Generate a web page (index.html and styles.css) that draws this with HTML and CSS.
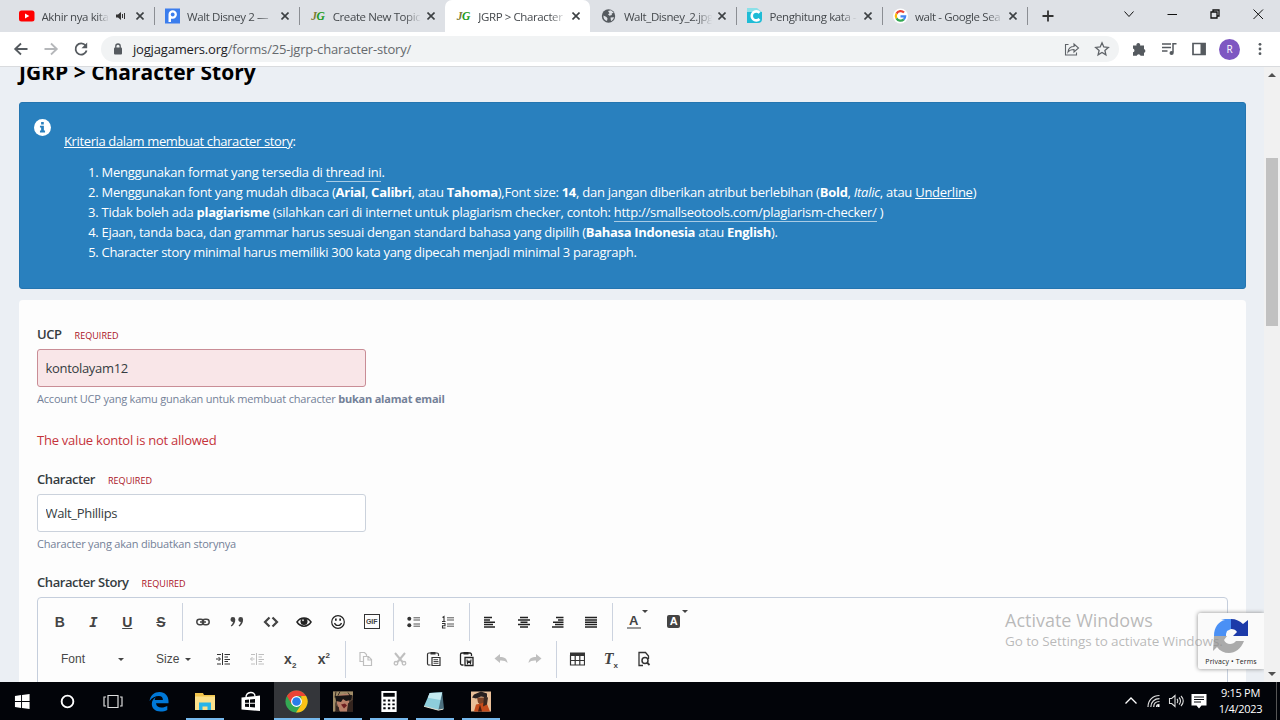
FILE: index.html
```html
<!DOCTYPE html>
<html lang="id">
<head>
    <meta charset="utf-8">
    <title>JGRP &gt; Character Story</title>
    <link rel="stylesheet" href="styles.css">
</head>
<body>

<!-- tabs -->
<div class="tabstrip">
    <div class="tab">
        <svg class="favicon" viewBox="0 0 16 16"><rect y="2.5" width="15.5" height="11" rx="2.5" fill="#f00"/><path d="M6 5.500v5l4.300-2.500z" fill="#fff"/></svg>
        <span class="tab-title short">Akhir nya kita</span>
        <svg class="sound" viewBox="0 0 10 10"><path d="M0 3.500h2L5 1v8L2 6.500H0z" fill="#333"/><path d="M6.500 3v4M8.500 2v6" stroke="#333"/></svg>
        <svg class="close" viewBox="0 0 8 8"><path d="M.5.5l7 7M7.500.5l-7 7"/></svg>
    </div>
    <div class="tab">
        <svg class="favicon" viewBox="0 0 16 16"><rect width="15" height="15" y=".5" fill="#3b7ded"/><path d="M3.500 8V6.500a4.200 4.200 0 1 1 4.200 4.200H6V14H3.500z" fill="#fff"/><circle cx="7.700" cy="6.500" r="1.900" fill="#3b7ded"/></svg>
        <span class="tab-title">Walt Disney 2 —</span>
        <svg class="close" viewBox="0 0 8 8"><path d="M.5.5l7 7M7.500.5l-7 7"/></svg>
    </div>
    <div class="tab no-sep">
        <span class="favicon jg"><i>J</i>G</span>
        <span class="tab-title">Create New Topic</span>
        <svg class="close" viewBox="0 0 8 8"><path d="M.5.5l7 7M7.500.5l-7 7"/></svg>
    </div>
    <div class="tab active no-sep">
        <span class="favicon jg"><i>J</i>G</span>
        <span class="tab-title">JGRP &gt; Character</span>
        <svg class="close" viewBox="0 0 8 8"><path d="M.5.5l7 7M7.500.5l-7 7"/></svg>
    </div>
    <div class="tab">
        <svg class="favicon" viewBox="0 0 16 16"><circle cx="7.500" cy="8" r="6.700" fill="#555a5f"/><path d="M2.500 7.500l3 1.500 1 1.500-.5 2.500C3.500 12.500 2 10 2.500 7.500zM7 3l3-.8 2.700 2.600-2 .7.200 1.500-2.400.7-1.500-1.500 1.500-1zM9.500 9.500l3.500-.3c-.5 2-1.500 3-3 3.800z" fill="#dee1e6"/></svg>
        <span class="tab-title">Walt_Disney_2.jpg</span>
        <svg class="close" viewBox="0 0 8 8"><path d="M.5.5l7 7M7.500.5l-7 7"/></svg>
    </div>
    <div class="tab">
        <svg class="favicon" viewBox="0 0 16 16"><path d="M0 0h10l5 4v7l-4 4H0z" fill="#8be0e8"/><path d="M0 4h15v7a4 4 0 0 1-4 4H0z" fill="#1fbcd6"/><path d="M12.500 4.800a4.500 4.500 0 1 0 0 6.200" fill="none" stroke="#fff" stroke-width="2.600"/></svg>
        <span class="tab-title">Penghitung kata -</span>
        <svg class="close" viewBox="0 0 8 8"><path d="M.5.5l7 7M7.500.5l-7 7"/></svg>
    </div>
    <div class="tab">
        <svg class="favicon" viewBox="0 0 16 16"><circle cx="7.500" cy="8" r="7.500" fill="#fff"/><g fill="none" stroke-width="2.200"><path d="M11 4.600A4.700 4.700 0 0 0 3.500 5.600" stroke="#ea4335"/><path d="M3.500 5.600a4.700 4.700 0 0 0 0 4.800" stroke="#fbbc05"/><path d="M3.500 10.400a4.700 4.700 0 0 0 7.300 1" stroke="#34a853"/><path d="M10.800 11.400A4.500 4.500 0 0 0 12.200 8.300H7.500" stroke="#4285f4"/></g></svg>
        <span class="tab-title">walt - Google Sea</span>
        <svg class="close" viewBox="0 0 8 8"><path d="M.5.5l7 7M7.500.5l-7 7"/></svg>
    </div>
    <svg class="newtab" viewBox="0 0 12 12"><path d="M6 .5v11M.5 6h11" stroke="#333" stroke-width="1.800"/></svg>
    <div class="window-buttons">
        <svg viewBox="0 0 12 12"><path d="M1.500 3.500L6 8.500l4.500-5"/></svg>
        <svg viewBox="0 0 12 12"><path d="M1.500 6.500h9.500"/></svg>
        <svg viewBox="0 0 12 12"><path d="M2 4h6v6H2zM4 4V2h6v6H8" stroke-width="1.300"/></svg>
        <svg viewBox="0 0 12 12"><path d="M1.500 1.500l9.500 9.500M11 1.500L1.500 11"/></svg>
    </div>
</div>

<!-- toolbar -->
<div class="toolbar">
    <div class="nav">
        <svg viewBox="0 0 16 16"><path d="M14.500 8H2.500M8 2.500L2.200 8 8 13.500"/></svg>
        <svg class="off" viewBox="0 0 16 16"><path d="M1.500 8h12M8 2.500L13.800 8 8 13.500"/></svg>
        <svg viewBox="0 0 16 16"><path d="M12.600 4.500A5.600 5.600 0 1 0 13.600 9.500"/><path d="M14.200 1.500v5.700H8.500z" fill="#555a5f" stroke="none"/></svg>
    </div>
    <div class="omnibox">
        <svg class="lock" viewBox="0 0 10 12"><rect x="1" y="4.500" width="8" height="7" rx="1" fill="#555a5f"/><path d="M2.800 5V3.200a2.200 2.200 0 0 1 4.400 0V5" fill="none" stroke="#555a5f" stroke-width="1.300"/></svg>
        <span class="url"><b>jogjagamers.org</b>/forms/25-jgrp-character-story/</span>
        <svg class="omni-icon" viewBox="0 0 16 16"><path d="M4.500 3.500h-3v10.500h11v-2.500M4 11c.5-4 3-5.500 6-5.500V3l4.500 4-4.500 4V8.500C7 8.500 5.500 9 4 11z" stroke-width="1.100"/></svg>
        <svg class="omni-icon" viewBox="0 0 16 16"><path d="M8 1.800l1.800 4.200 4.500.4-3.400 3 1 4.400L8 11.500l-3.900 2.300 1-4.400-3.400-3L6.200 6z" stroke-width="1.300"/></svg>
    </div>
    <div class="extensions">
        <svg viewBox="0 0 16 16"><path d="M2 4.500h3.500a1.900 1.900 0 1 1 3.600 0H13V8a2 2 0 0 1 0 3.800v3H9.600a2 2 0 0 0-3.900 0H2v-3.500a1.900 1.900 0 0 0 0-3.700z" fill="#555a5f"/></svg>
        <svg viewBox="0 0 16 16"><path d="M1 3h9M1 6.500h9M1 10h5.500M12 11.500V2.700h3.500" stroke="#555a5f" stroke-width="1.500" fill="none"/><circle cx="10.600" cy="12" r="2.100" fill="#555a5f"/></svg>
        <svg viewBox="0 0 16 16"><path d="M2 2.500h12v11H2z" fill="none" stroke="#555a5f" stroke-width="1.700"/><path d="M9.500 2h5v12h-5z" fill="#555a5f"/></svg>
        <span class="avatar">R</span>
        <svg viewBox="0 0 16 16"><g fill="#555a5f"><circle cx="8" cy="3.300" r="1.400"/><circle cx="8" cy="8" r="1.400"/><circle cx="8" cy="12.700" r="1.400"/></g></svg>
    </div>
</div>

<div class="viewport">
    <div class="page">
        <h1>JGRP &gt; Character Story</h1>

        <div class="message">
            <svg class="info" viewBox="0 0 16 16"><circle cx="8" cy="8" r="8" fill="#fff"/><path d="M6.700 2.800h2.500v2.300H6.700zM5.600 6.400h3.700v4.500h1.100v1.700H5.600v-1.700h1.100V8.100H5.600z" fill="#2980be"/></svg>
            <div class="message-text">
                <p><u>Kriteria dalam membuat character story</u>:</p>
                <ol>
                    <li>Menggunakan format yang tersedia di <a href="#">thread ini</a>.</li>
                    <li>Menggunakan font yang mudah dibaca (<b>Arial</b>, <b>Calibri</b>, atau <b>Tahoma</b>),Font size: <b>14</b>, dan jangan diberikan atribut berlebihan (<b>Bold</b>, <i>Italic</i>, atau <u>Underline</u>)</li>
                    <li>Tidak boleh ada <b>plagiarisme</b> (silahkan cari di internet untuk plagiarism checker, contoh: <a href="#">http://smallseotools.com/plagiarism-checker/</a> )</li>
                    <li class="tight">Ejaan, tanda baca, dan grammar harus sesuai dengan standard bahasa yang dipilih (<b>Bahasa Indonesia</b> atau <b>English</b>).</li>
                    <li class="tight">Character story minimal harus memiliki 300 kata yang dipecah menjadi minimal 3 paragraph.</li>
                </ol>
            </div>
        </div>

        <form class="box">
            <div class="field field-ucp">
                <label>UCP <span class="required">REQUIRED</span></label>
                <input type="text" class="error" value="kontolayam12">
                <div class="desc">Account UCP yang kamu gunakan untuk membuat character <b>bukan alamat email</b></div>
                <p class="warning">The value kontol is not allowed</p>
            </div>
            <div class="field field-char">
                <label>Character <span class="required">REQUIRED</span></label>
                <input type="text" value="Walt_Phillips">
                <div class="desc">Character yang akan dibuatkan storynya</div>
            </div>
            <div class="field">
                <label>Character Story <span class="required">REQUIRED</span></label>
                <div class="editor">
                    <div class="row">
                        <div class="group">
                            <span class="btn"><b>B</b></span>
                            <span class="btn slab"><b><i>I</i></b></span>
                            <span class="btn"><b><u>U</u></b></span>
                            <span class="btn"><b><s>S</s></b></span>
                        </div>
                        <div class="group">
                            <span class="btn"><svg viewBox="0 0 16 16"><g fill="none" stroke="#444" stroke-width="1.500"><rect x="1.800" y="5.300" width="6.800" height="5.400" rx="2.700"/><rect x="7.400" y="5.300" width="6.800" height="5.400" rx="2.700"/><path d="M5 8h6"/></g></svg></span>
                            <span class="btn"><svg viewBox="0 0 16 16"><path d="M1.500 5.500a2.400 2.400 0 1 1 4.800 0c0 3-1.300 5.500-3.800 7l-.7-1c1.300-1 2-2.200 2.200-3.500-1.500 0-2.500-1-2.500-2.500zM9.300 5.500a2.400 2.400 0 1 1 4.800 0c0 3-1.300 5.500-3.800 7l-.7-1c1.300-1 2-2.200 2.200-3.500-1.500 0-2.500-1-2.500-2.500z" fill="#444"/></svg></span>
                            <span class="btn"><svg viewBox="0 0 16 16"><path d="M6.500 3.500L2 8l4.500 4.500M9.500 3.500L14 8l-4.500 4.500" fill="none" stroke="#444" stroke-width="2.200"/></svg></span>
                            <span class="btn"><svg viewBox="0 0 16 16"><path d="M1 8c3.500-5.500 10.500-5.500 14 0-3.500 5.500-10.500 5.500-14 0z" fill="none" stroke="#222" stroke-width="1.500"/><circle cx="8" cy="7.500" r="3.500" fill="#222"/><circle cx="7" cy="6.300" r="1" fill="#ccc"/></svg></span>
                            <span class="btn"><svg viewBox="0 0 16 16"><circle cx="8" cy="8" r="6.300" fill="none" stroke="#222" stroke-width="1.200"/><path d="M4.500 9a3.700 3.700 0 0 0 7 0" fill="none" stroke="#222" stroke-width="1.200"/><path d="M5 4.500h1.700v2.300H5zM9.300 4.500H11v2.300H9.300z" fill="#222"/></svg></span>
                            <span class="btn"><span class="gif">GIF</span></span>
                        </div>
                        <div class="group">
                            <span class="btn"><svg viewBox="0 0 16 16"><g fill="#333"><circle cx="3.300" cy="4.800" r="2"/><circle cx="3.300" cy="11.200" r="2"/></g><path d="M7.500 3.800H14M7.500 6H14M7.500 10H14M7.500 12.200H14" stroke="#555"/></svg></span>
                            <span class="btn"><svg viewBox="0 0 16 16"><path d="M2.500 3.500l1.500-1v5M2 7.500h3.500M2 9.500h3v2.200H2.500V14H5.500" fill="none" stroke="#333" stroke-width="1.100"/><path d="M7 3.800h7M7 6h7M7 10h7M7 12.200h7" stroke="#555"/></svg></span>
                        </div>
                        <div class="group">
                            <span class="btn"><svg viewBox="0 0 16 16"><path d="M2 3.500h8M2 6h6M2 8.200h11M2 10.500h9M2 13h11" stroke="#222" stroke-width="1.500"/></svg></span>
                            <span class="btn"><svg viewBox="0 0 16 16"><path d="M4 3.500h8M2 6h12M4.500 8.200h7M2 10.500h12M4 13h8" stroke="#222" stroke-width="1.500"/></svg></span>
                            <span class="btn"><svg viewBox="0 0 16 16"><path d="M6 3.500h7.500M8 6h5.500M3 8.200h10.500M5 10.500h8.500M2 13h11.500" stroke="#222" stroke-width="1.500"/></svg></span>
                            <span class="btn"><svg viewBox="0 0 16 16"><path d="M2 3.500h12M2 6h12M2 8.200h12M2 10.500h12M2 13h12" stroke="#222" stroke-width="1.500"/></svg></span>
                        </div>
                        <div class="group last colors">
                            <span class="btn color"><span class="fg">A</span><i class="caret"></i></span>
                            <span class="btn color"><span class="bg">A</span><i class="caret"></i></span>
                        </div>
                    </div>
                    <div class="row">
                        <div class="group">
                            <span class="combo font">Font <i class="caret"></i></span>
                            <span class="combo size">Size <i class="caret"></i></span>
                            <span class="btn"><svg viewBox="0 0 16 16"><path d="M1 8h4M3.500 6L5.500 8l-2 2M7.500 2v12" fill="none" stroke="#333"/><path d="M9.500 3.500H15M9.500 6H13M9.500 8.500H15M9.500 10.500H13M9.500 13H15M2 3.500h4M2 13h4" stroke="#333" stroke-width="1.100"/></svg></span>
                            <span class="btn off"><svg viewBox="0 0 16 16"><path d="M1.500 8h4M3.500 6L1.500 8l2 2M7.500 2v12" fill="none" stroke="#333"/><path d="M9.500 3.500H15M9.500 6H13M9.500 8.500H15M9.500 10.500H13M9.500 13H15M2 3.500h4M2 13h4" stroke="#333" stroke-width="1.100"/></svg></span>
                            <span class="btn"><b>x<sub>2</sub></b></span>
                            <span class="btn"><b>x<sup>2</sup></b></span>
                        </div>
                        <div class="group">
                            <span class="btn off"><svg viewBox="0 0 16 16"><path d="M5 10.500H2v-9h4.500l2 2V5M5.500 5.500h5l3 3v6h-8zM10 5.500V9h3.500" fill="none" stroke="#333" stroke-width="1.200"/></svg></span>
                            <span class="btn off"><svg viewBox="0 0 16 16"><path d="M3 2l7.500 9M13 2L5.500 11" stroke="#333" stroke-width="2"/><g fill="none" stroke="#333" stroke-width="1.300"><circle cx="4" cy="12.300" r="1.800"/><circle cx="12" cy="12.300" r="1.800"/></g></svg></span>
                            <span class="btn"><svg viewBox="0 0 16 16"><path d="M4.500 14H3a1.500 1.500 0 0 1-1.500-1.500v-9A1.500 1.500 0 0 1 3 2h8a1.500 1.500 0 0 1 1.500 1.500V5M6 6.500h8v8H6z" fill="none" stroke="#333" stroke-width="1.200"/><path d="M4.500 1h5v2.500h-5z" fill="#333"/><path d="M7.500 8.700H12M7.500 10.500h5M7.500 12.300h5" stroke="#333" stroke-width=".9"/></svg></span>
                            <span class="btn"><svg viewBox="0 0 16 16"><path d="M4.500 14H3a1.500 1.500 0 0 1-1.500-1.500v-9A1.500 1.500 0 0 1 3 2h8a1.500 1.500 0 0 1 1.500 1.500V5M6 6.500h8v8H6z" fill="none" stroke="#222" stroke-width="1.300"/><path d="M4.500 1h5v2.500h-5z" fill="#222"/><path d="M8 8.500l.5 3.800L10 10l1.500 2.300.5-3.800" fill="none" stroke="#222" stroke-width="1.200"/></svg></span>
                            <span class="btn off"><svg viewBox="0 0 16 16"><path d="M1.500 7.500L7 3v3c4.500 0 7 1.500 7.500 6C13 10 10.500 9.300 7 9.500V12z" fill="#333"/></svg></span>
                            <span class="btn off"><svg viewBox="0 0 16 16"><path d="M14.500 7.500L9 3v3c-4.500 0-7 1.500-7.500 6C3 10 5.500 9.300 9 9.500V12z" fill="#333"/></svg></span>
                        </div>
                        <div class="group last">
                            <span class="btn"><svg viewBox="0 0 16 16"><path d="M1 1.500h15v3.500H1z" fill="#333"/><path d="M1.500 4v10h14V4M1.500 9.500h14M6.200 5v9M10.800 5v9" fill="none" stroke="#333" stroke-width="1.200"/></svg></span>
                            <span class="btn tx"><b><i>T</i><sub>x</sub></b></span>
                            <span class="btn"><svg viewBox="0 0 16 16"><path d="M7 14.500H3v-13h6.500L12.500 5v3" fill="none" stroke="#333" stroke-width="1.300"/><circle cx="9" cy="9.500" r="3" fill="none" stroke="#333" stroke-width="1.500"/><path d="M11 11.500l2.500 2.500" stroke="#333" stroke-width="1.800"/></svg></span>
                        </div>
                    </div>
                </div>
            </div>
        </form>
    </div>
    <div class="scrollbar">
        <i class="arrow up"></i>
        <div class="thumb"></div>
        <i class="arrow down"></i>
    </div>

    <div class="recaptcha">
        <svg viewBox="0 0 36 36"><path d="M1 18C1 9 6 3 12 2L8 1h10v10l-4 2-1 3v2z" fill="#4a90f5"/><path d="M18 1c5 0 9 2 12 5l5-4v16H20l4-4c-1-2-3-3-6-3z" fill="#1c3aa9"/><path d="M1 18h13l-3 4c2 5 9 5 12 1h8c-3 8-9 12-15 12-5 0-9-2-12-6l-4 4z" fill="#ababab"/></svg>
        <span>Privacy • Terms</span>
    </div>
    <div class="watermark">
        <div class="big">Activate Windows</div>
        <div class="small">Go to Settings to activate Windows.</div>
    </div>
</div>

<!-- taskbar -->
<div class="taskbar">
    <div class="task narrow"><svg viewBox="0 0 18 18"><path d="M1 3.200l6.500-1v6.300H1zM8.500 2L16.500 1v7.500h-8zM1 9.500h6.500v6.300l-6.500-1zM8.500 9.500h8V17l-8-1z" fill="#fff"/></svg></div>
    <div class="task narrow"><svg viewBox="0 0 18 18"><circle cx="9" cy="9" r="6.200" fill="none" stroke="#fff" stroke-width="2"/></svg></div>
    <div class="task narrow"><svg class="wide" viewBox="0 0 20 18"><path d="M5 3h10v12H5zM3 4.500H1v9h2M17 4.500h2v9h-2" fill="none" stroke="#ddd" stroke-width="1.200"/></svg></div>
    <div class="task"><svg class="wide" viewBox="0 0 20 20"><path d="M.5 9.500C1.500 3.500 5.500.5 10.500.5 16 .5 19.500 4.500 19.500 9.500v2.200H7c.3 3 2.500 4.300 5.500 4.300 2.300 0 4.200-.6 5.800-1.500v4c-2 1-4 1.500-6.800 1.500C6 20 2.800 16.800 2.800 12.500c0-3 1.500-5.300 4-6.700-.6.700-1 1.600-1.100 2.700h8.200c0-2.500-1.300-4-4-4-3.500 0-6.900 1.800-9.400 5z" fill="#0078d7"/></svg></div>
    <div class="task open"><svg class="wide" viewBox="0 0 20 20"><path d="M0 1.500h8l1 2h11v15H0z" fill="#f0c44c"/><path d="M0 5h20v13.500H0z" fill="#fbe08a"/><path d="M4 11h12v7.500h-3.500V15h-5v3.500H4z" fill="#27b4e8"/></svg></div>
    <div class="task"><svg class="wide" viewBox="0 0 20 20"><path d="M.5 6L19 4v15.500L.5 18z" fill="#fff"/><path d="M5 6c0-6 9-7 9-1" fill="none" stroke="#fff" stroke-width="1.400"/><path d="M4 8.500l4-.4v3.200H4zM9 8l5-.5v3.800H9zM4 12.300h4v3.300l-4-.3zM9 12.300h5V16l-5-.4z" fill="#05070b"/></svg></div>
    <div class="task open current"><svg class="chrome" viewBox="0 0 24 24"><circle cx="12" cy="12" r="11.500" fill="#34a853"/><path d="M2 6.250A11.500 11.500 0 0 1 22 6.250H12l-5 8.600z" fill="#ea4335"/><path d="M22 6.250A11.500 11.500 0 0 1 11.500 23.500L17 15V6.250z" fill="#fbc116"/><circle cx="12" cy="12" r="5.700" fill="#fff"/><circle cx="12" cy="12" r="4.500" fill="#2a7de9"/></svg></div>
    <div class="task open"><svg class="wide" viewBox="0 0 20 20"><path d="M0 0h20v20H0z" fill="#594738"/><path d="M4 2h12v9l-2 9H7L4 12z" fill="#b87f68"/><path d="M0 0h20v4L12 2 5 4 2 12v8H0z" fill="#a08c67"/><path d="M3 0l-1 6M7 0L5 4M15 1l4 6" stroke="#3b2c22"/><path d="M2 4.500l17-1-1 5-5 1-3-2-2 3-5-1z" fill="#181515"/><path d="M8 13l4-1 2 2-3 3z" fill="#6e1f20"/><path d="M15 12l5-4v12h-6zM3 14l3 2v4H3z" fill="#34251f"/></svg></div>
    <div class="task open"><svg class="wide" viewBox="0 0 20 22"><path d="M2 0h16v22H2z" fill="#fff"/><path d="M4 2h12v4H4z" fill="#05070b"/><path d="M4 9h2.500v2H4zM8.800 9h2.500v2H8.800zM13.500 9H16v2h-2.500zM4 13h2.500v2H4zM8.800 13h2.500v2H8.800zM13.500 13H16v2h-2.500zM4 17h2.500v2H4zM8.800 17h2.500v2H8.800zM13.500 17H16v2h-2.500z" fill="#05070b"/></svg></div>
    <div class="task open"><svg class="chrome" viewBox="0 0 24 24"><path d="M7 3l13-1 2 18-6 1z" fill="#4d7180"/><path d="M7 3l13-.5L16 21 1 17z" fill="#8dcddb"/><path d="M7 3l13-.5-2 8L5 8z" fill="#c5eaf0"/><path d="M1 17l15 4 5-1" fill="none" stroke="#e9e5d5"/></svg></div>
    <div class="task open"><svg class="wide" viewBox="0 0 20 20"><path d="M0 0h20v20H0z" fill="#e9bf98"/><path d="M6 6h8v5l-4 3-3-3z" fill="#7c4327"/><path d="M3 3l7-3 6 2v4l-6-1-5 2-4-1z" fill="#282020"/><path d="M3 20l2-7 5-1 5-2 4 10z" fill="#c44c1c"/><path d="M13 5l4 1-1 7-4 2z" fill="#3a2821"/><path d="M9 13l2 7H7z" fill="#451d12"/></svg></div>
    <div class="tray">
        <svg viewBox="0 0 16 16"><path d="M2.500 10.500L8 5l5.500 5.500" fill="none" stroke="#fff" stroke-width="1.300"/></svg>
        <svg viewBox="0 0 16 16"><g fill="none" stroke="#ddd" stroke-width="1.200"><path d="M2 14C2 7 7 2.500 13.500 2.500M4.800 14c0-5 3.700-8.300 8.700-8.300M7.700 14c0-3.300 2.300-5.500 5.800-5.500M10.500 14c0-1.500 1-2.700 3-2.700"/></g><path d="M11.500 12h2v2h-2z" fill="#fff"/></svg>
        <svg viewBox="0 0 16 16"><path d="M1.500 5.500h2.200L7 2.500v11L3.700 10.500H1.500zM9 6c1 1 1 3 0 4M11 4.500c2 2 2 5 0 7M13 3c3 3 3 7 0 10" fill="none" stroke="#ddd" stroke-width="1.100"/></svg>
        <svg viewBox="0 0 16 16"><path d="M.5 1h15v11.500h-5L8 15.500 5.500 12.500h-5z" fill="#fff"/><path d="M3 4h10M3 6.500h10M3 9h7" stroke="#05070b"/></svg>
        <div class="clock">9:15 PM<br>1/4/2023</div>
    </div>
</div>

</body>
</html>
```
FILE: styles.css
```css
* {
    box-sizing:border-box;
}

body {
    margin:0;
    width:1280px;
    height:720px;
    overflow:hidden;
    display:flex;
    flex-direction:column;
    font-family:"Open Sans","Noto Sans",sans-serif;
    color:#353c41;
}

svg {
    display:block;
    flex:none;
}

/* tabs */
.tabstrip {
    display:flex;
    align-items:center;
    height:32px;
    padding-left:8px;
    background:#dee1e6;
}

.tab {
    display:flex;
    align-items:center;
    width:145.6px;
    height:32px;
    padding:0 10px 0 11px;
    position:relative;
}

.tab:not(.no-sep)::after {
    content:"";
    position:absolute;
    right:-1px;
    top:7px;
    width:1px;
    height:18px;
    background:#8b8e93;
}

.tab.active {
    background:#fff;
    border-radius:7px 7px 0 0;
}

.favicon {
    width:16px;
    height:16px;
    flex:none;
}

.favicon.jg {
    padding-left:1px;
    font:italic bold 11.5px/16px "Liberation Serif",serif;
    letter-spacing:-.5px;
    color:#219a21;
}

.favicon.jg i {
    color:#7c7a36;
}

.tab-title {
    width:92px;
    margin-left:6.5px;
    overflow:hidden;
    white-space:nowrap;
    font-size:11.5px;
    letter-spacing:-.4px;
    color:#45494d;
    -webkit-mask-image:linear-gradient(90deg,#000 78%,transparent 96%);
    mask-image:linear-gradient(90deg,#000 78%,transparent 96%);
}

.tab-title.short {
    width:70px;
}

.sound {
    width:10px;
    height:10px;
    margin-left:4px;
}

.close {
    width:8px;
    height:8px;
    margin-left:auto;
    stroke:#3c4043;
    stroke-width:1.6;
}

.newtab {
    width:12px;
    height:12px;
    margin-left:15px;
}

.window-buttons {
    display:flex;
    gap:31px;
    margin:-5px 16px 0 auto;
}

.window-buttons svg {
    width:12px;
    height:12px;
    fill:none;
    stroke:#111;
}

/* toolbar */
.toolbar {
    display:flex;
    align-items:center;
    height:35px;
    padding-left:13px;
    background:#fff;
    border-bottom:1px solid #d9dbde;
}

.nav {
    display:flex;
    gap:14px;
    width:88px;
}

.nav svg {
    width:16px;
    height:16px;
    fill:none;
    stroke:#555a5f;
    stroke-width:1.8;
}

.nav svg.off {
    stroke:#b5b7ba;
}

.omnibox {
    display:flex;
    align-items:center;
    width:1018px;
    height:26px;
    padding:0 9px 0 12px;
    border-radius:13px;
    background:#f1f3f4;
}

.lock {
    width:10px;
    height:12px;
}

.url {
    flex:1;
    margin-left:10px;
    font-size:13px;
    letter-spacing:-.18px;
    color:#65696d;
}

.url b {
    font-weight:normal;
    color:#202124;
}

.omni-icon {
    width:16px;
    height:16px;
    margin-left:14px;
    fill:none;
    stroke:#5f6368;
}

.extensions {
    display:flex;
    align-items:center;
    gap:14px;
    margin-left:12px;
}

.extensions svg {
    width:16px;
    height:16px;
}

.avatar {
    width:21px;
    height:21px;
    margin:0 -2px;
    border-radius:50%;
    background:#7e57c2;
    color:#fff;
    font-size:10px;
    line-height:21px;
    text-align:center;
}

/* page */
.viewport {
    display:flex;
    height:615px;
    position:relative;
    overflow:hidden;
    background:#ebeff4;
}

.page {
    width:1264px;
    padding:0 18px 0 19px;
}

h1 {
    margin:-10px 0 0;
    height:45px;
    font-size:21px;
    line-height:30px;
    font-weight:bold;
    color:#000;
}

.message {
    display:flex;
    height:187px;
    padding:16px 15px;
    background:#2980be;
    border:1px solid #2475b0;
    border-radius:3px;
    color:#fff;
    font-size:13px;
    line-height:19.8px;
}

.info {
    width:17px;
    height:17px;
    margin-left:-1px;
}

.message-text {
    margin:12.6px 0 0 13px;
}

.message p {
    margin:0 0 12px;
    letter-spacing:-.37px;
}

.message ol {
    margin:0;
    padding-left:37.5px;
    white-space:nowrap;
    letter-spacing:-.265px;
}

.message li.tight {
    letter-spacing:-.31px;
}

.message a {
    color:#fff;
    text-decoration:none;
    border-bottom:1px solid #a9cce5;
}

.box {
    height:420px;
    margin-top:11px;
    padding:24px 18px 0;
    background:#fdfdfd;
    border-radius:4px;
}

.field label {
    display:block;
    height:20px;
    font-size:13px;
    line-height:20px;
    font-weight:600;
    letter-spacing:-.43px;
}

.required {
    margin-left:10px;
    font-size:9px;
    font-weight:normal;
    letter-spacing:.05px;
    color:#aa1224;
}

.field input {
    display:block;
    width:328.5px;
    height:38px;
    margin-top:5px;
    padding:0 7.5px;
    border:1px solid #cbd2dc;
    border-radius:3px;
    background:#fff;
    font:13px "Open Sans","Noto Sans",sans-serif;
    letter-spacing:-.32px;
    color:#353c41;
}

.field input.error {
    background:#f9e6e8;
    border-color:#c98d96;
}

.desc {
    margin-top:4px;
    font-size:11px;
    line-height:16px;
    letter-spacing:-.2px;
    color:#748198;
}

.warning {
    margin:23px 0 0;
    font-size:13px;
    line-height:20px;
    letter-spacing:-.24px;
    color:#c5343c;
}

.field-ucp {
    height:145px;
}

.field-char {
    height:103px;
}

/* editor */
.editor {
    height:120px;
    margin-top:5px;
    padding:5px;
    border:1px solid #c5cedc;
    border-radius:4px;
}

.row {
    display:flex;
    height:37.5px;
}

.group {
    display:flex;
    align-items:center;
    padding-right:4px;
    margin-right:3.7px;
    border-right:1px solid #ccd3df;
}

.group.last {
    border:0;
}

.group.colors {
    margin-left:-3px;
}

.btn {
    display:flex;
    align-items:center;
    justify-content:center;
    width:33.7px;
    height:30px;
    position:relative;
    font:14px "Liberation Sans",sans-serif;
    color:#444;
}

.btn.slab {
    font-family:"DejaVu Sans Mono",monospace;
    font-size:14px;
}

.btn.off {
    opacity:.3;
}

.btn svg {
    width:16px;
    height:16px;
}

.btn sub, .btn sup {
    font-size:8px;
    line-height:0;
}

.btn.tx i {
    font-family:"Liberation Serif",serif;
    font-size:16px;
}

.gif {
    width:16px;
    height:15px;
    border:1px solid #333;
    font-size:7px;
    font-weight:bold;
    line-height:13px;
    text-align:center;
}

.btn.color {
    width:40px;
}

.fg {
    width:14px;
    border-bottom:2px solid #999;
    font-weight:bold;
    font-size:13px;
    line-height:13px;
    text-align:center;
}

.bg {
    width:13px;
    height:13px;
    border-radius:2px;
    background:#444;
    color:#fff;
    font-weight:bold;
    font-size:11px;
    line-height:13px;
    text-align:center;
}

.caret {
    border:3px solid transparent;
    border-top-color:#444;
    border-bottom:0;
}

.btn.color .caret {
    position:absolute;
    right:6px;
    top:3px;
}

.combo {
    display:flex;
    align-items:center;
    justify-content:space-between;
    font:12px "Liberation Sans",sans-serif;
    color:#484848;
}

.combo.font {
    width:63px;
    margin-left:18px;
}

.combo.size {
    width:35px;
    margin:0 15px 0 32px;
}

/* scrollbar */
.scrollbar {
    display:flex;
    flex-direction:column;
    align-items:center;
    width:16px;
    padding:6px 0;
    background:#f1f1f1;
}

.arrow {
    border:4px solid transparent;
}

.arrow.up {
    border-top:0;
    border-bottom-color:#505050;
}

.arrow.down {
    margin-top:auto;
    border-bottom:0;
    border-top-color:#505050;
}

.thumb {
    width:12px;
    height:168px;
    margin-top:81px;
    background:#c1c1c1;
}

.recaptcha {
    position:absolute;
    right:16px;
    top:546px;
    width:66px;
    height:56px;
    padding-top:5px;
    background:#fafafa;
    border-radius:2px 0 0 2px;
    box-shadow:0 0 4px #888;
    clip-path:inset(-5px 0 -5px -5px);
    font-size:7px;
    line-height:12px;
    letter-spacing:.1px;
    text-align:center;
    color:#222;
}

.recaptcha svg {
    width:36px;
    height:36px;
    margin:0 auto 2px;
}

.recaptcha span {
    display:block;
    white-space:nowrap;
}

.watermark {
    position:absolute;
    left:1005px;
    top:541px;
    color:rgba(140,140,140,.6);
    white-space:nowrap;
}

.watermark .big {
    font-size:18px;
    line-height:25px;
}

.watermark .small {
    font-size:13.5px;
    line-height:16px;
    letter-spacing:-.1px;
}

/* taskbar */
.taskbar {
    display:flex;
    height:38px;
    background:#020409;
}

.task {
    display:flex;
    align-items:center;
    justify-content:center;
    width:46px;
    position:relative;
}

.task.narrow {
    width:45.2px;
}

.task svg {
    width:17px;
    height:17px;
}

.task svg.wide {
    width:20px;
    height:21px;
}

.task svg.chrome {
    width:23px;
    height:23px;
}

.task.open::after {
    content:"";
    position:absolute;
    left:4px;
    right:4px;
    bottom:0;
    height:2px;
    background:#76b9ed;
}

.task.current {
    background:#34363a;
}

.task.current::after {
    left:0;
    right:0;
}

.tray {
    display:flex;
    align-items:center;
    gap:6.5px;
    margin-left:auto;
    margin-right:3px;
    border-right:1px solid #555;
    padding-right:10px;
}

.tray svg {
    width:16px;
    height:16px;
}

.clock {
    width:53px;
    padding-left:2px;
    color:#fff;
    font-size:11px;
    line-height:16px;
    letter-spacing:-.3px;
    text-align:center;
    white-space:nowrap;
}
```
